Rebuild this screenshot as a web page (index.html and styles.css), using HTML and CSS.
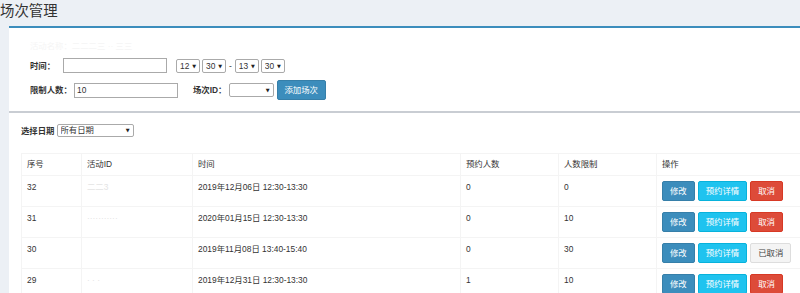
FILE: index.html
```html
<!DOCTYPE html>
<html lang="zh-CN">
<head>
  <meta charset="UTF-8">
  <meta name="viewport" content="width=device-width, initial-scale=1.0">
  <title>场次管理</title>
  <link rel="stylesheet" href="styles.css">
</head>
<body>
  <header class="content-header">
    <h1>场次管理</h1>
  </header>

  <section class="box box-form">
    <p class="box-note">活动名称：二二二三 ·· 三三</p>
    <div class="form-row">
      <label class="label-time">时间：</label>
      <input type="text" class="field">
      <span class="time-range">
        <span class="sel sel-xs"><select><option>12</option></select></span>
        <span class="sel sel-xs"><select><option>30</option></select></span>
        <span class="dash">-</span>
        <span class="sel sel-xs"><select><option>13</option></select></span>
        <span class="sel sel-xs"><select><option>30</option></select></span>
      </span>
    </div>
    <div class="form-row">
      <label class="label-limit">限制人数：</label>
      <input type="text" class="field" value="10">
      <label class="label-id">场次ID：</label>
      <span class="sel sel-md"><select><option></option></select></span>
      <button type="button" class="btn btn-primary btn-add">添加场次</button>
    </div>
  </section>

  <section class="box box-list">
    <div class="filter">
      <label>选择日期</label>
      <span class="sel sel-lg"><select><option>所有日期</option></select></span>
    </div>

    <table class="table">
      <colgroup>
        <col class="c-no">
        <col class="c-act">
        <col class="c-time">
        <col class="c-num">
        <col class="c-num">
        <col>
      </colgroup>
      <thead>
        <tr>
          <th>序号</th>
          <th>活动ID</th>
          <th>时间</th>
          <th>预约人数</th>
          <th>人数限制</th>
          <th>操作</th>
        </tr>
      </thead>
      <tbody>
        <tr>
          <td>32</td>
          <td><span class="masked">二二3</span></td>
          <td>2019年12月06日 12:30-13:30</td>
          <td>0</td>
          <td>0</td>
          <td>
            <div class="actions">
              <button type="button" class="btn btn-primary">修改</button>
              <button type="button" class="btn btn-info">预约详情</button>
              <button type="button" class="btn btn-danger">取消</button>
            </div>
          </td>
        </tr>
        <tr>
          <td>31</td>
          <td><span class="masked">···········</span></td>
          <td>2020年01月15日 12:30-13:30</td>
          <td>0</td>
          <td>10</td>
          <td>
            <div class="actions">
              <button type="button" class="btn btn-primary">修改</button>
              <button type="button" class="btn btn-info">预约详情</button>
              <button type="button" class="btn btn-danger">取消</button>
            </div>
          </td>
        </tr>
        <tr>
          <td>30</td>
          <td></td>
          <td>2019年11月08日 13:40-15:40</td>
          <td>0</td>
          <td>30</td>
          <td>
            <div class="actions">
              <button type="button" class="btn btn-primary">修改</button>
              <button type="button" class="btn btn-info">预约详情</button>
              <button type="button" class="btn btn-default">已取消</button>
            </div>
          </td>
        </tr>
        <tr>
          <td>29</td>
          <td><span class="masked">· · ·</span></td>
          <td>2019年12月31日 12:30-13:30</td>
          <td>1</td>
          <td>10</td>
          <td>
            <div class="actions">
              <button type="button" class="btn btn-primary">修改</button>
              <button type="button" class="btn btn-info">预约详情</button>
              <button type="button" class="btn btn-danger">取消</button>
            </div>
          </td>
        </tr>
      </tbody>
    </table>
  </section>
</body>
</html>
```

FILE: styles.css
```css
html, body {
  overflow: hidden;
}
body {
  margin: 0;
  background-color: #ecf0f5;
  font-family: "Liberation Sans", "Noto Sans CJK SC", sans-serif;
  font-size: 8.4px;
  line-height: 12px;
  color: #333;
}
.content-header {
  height: 26px;
}
.content-header h1 {
  margin: 0;
  font-size: 14.4px;
  font-weight: normal;
  line-height: 22px;
}
.box {
  margin-left: 9px;
  background-color: #fff;
}
.box-form {
  border-top: 2px solid #3c8dbc;
  padding: 12px 21px 11px;
}
.box-note {
  margin: 0 0 6px;
  color: #f5f5f5;
}
.form-row {
  display: flex;
  align-items: center;
}
.form-row + .form-row {
  margin-top: 7px;
}
label {
  font-weight: bold;
}
.label-time {
  width: 33px;
}
.label-limit {
  width: 44px;
}
.label-id {
  margin-left: 15px;
  margin-right: 2px;
}
.field {
  width: 104px;
  height: 15px;
  box-sizing: border-box;
  border: 1px solid #aaa;
  padding: 0 2px;
  font: inherit;
  color: #333;
}
.time-range {
  display: flex;
  align-items: center;
  gap: 2px;
  margin-left: 9px;
}
.dash {
  margin: 0 1px;
}
.sel {
  position: relative;
  display: inline-block;
  height: 14px;
  box-sizing: border-box;
  border: 1px solid #aaa;
  border-radius: 2px;
  background-color: #fff;
}
.sel select {
  -webkit-appearance: none;
  appearance: none;
  display: block;
  width: 100%;
  height: 12px;
  border: 0;
  padding: 0 0 0 3px;
  background: transparent;
  font: inherit;
  line-height: 12px;
  color: #333;
  outline: none;
}
.sel::after {
  content: "▼";
  position: absolute;
  right: 3px;
  top: 0;
  font-family: "DejaVu Sans", sans-serif;
  font-size: 5px;
  line-height: 12px;
  color: #222;
  pointer-events: none;
}
.sel-xs {
  width: 24px;
}
.sel-md {
  width: 45px;
}
.sel-lg {
  width: 77px;
  height: 13px;
}
.sel-lg select {
  height: 11px;
  line-height: 11px;
}
.sel-lg::after {
  line-height: 11px;
}
.btn {
  border: 1px solid transparent;
  border-radius: 2px;
  padding: 3px 7px;
  font: inherit;
  line-height: 12px;
  color: #fff;
  cursor: pointer;
}
.btn-add {
  margin-left: 3px;
}
.btn-primary {
  background-color: #3c8dbc;
  border-color: #367fa9;
}
.btn-info {
  background-color: #1fc3ef;
  border-color: #08b2db;
}
.btn-danger {
  background-color: #dd4b39;
  border-color: #d73925;
}
.btn-default {
  background-color: #f4f4f4;
  border-color: #ddd;
  color: #444;
}
.box-list {
  border-top: 2px solid #c9cdd3;
  padding: 11px 0 0 12px;
}
.filter {
  display: flex;
  align-items: center;
  height: 13px;
}
.filter label {
  margin-right: 2px;
}
.table {
  margin-top: 16px;
  width: 800px;
  border-collapse: collapse;
  table-layout: fixed;
}
.c-no {
  width: 60px;
}
.c-act {
  width: 111px;
}
.c-time {
  width: 268px;
}
.c-num {
  width: 98px;
}
.table th, .table td {
  border: 1px solid #f4f4f4;
  padding: 5px;
  text-align: left;
  font-weight: normal;
  vertical-align: top;
  white-space: nowrap;
}
.table th {
  padding-top: 4px;
}
.masked {
  color: #e4e4e4;
}
.actions {
  display: flex;
  gap: 3px;
}
```
